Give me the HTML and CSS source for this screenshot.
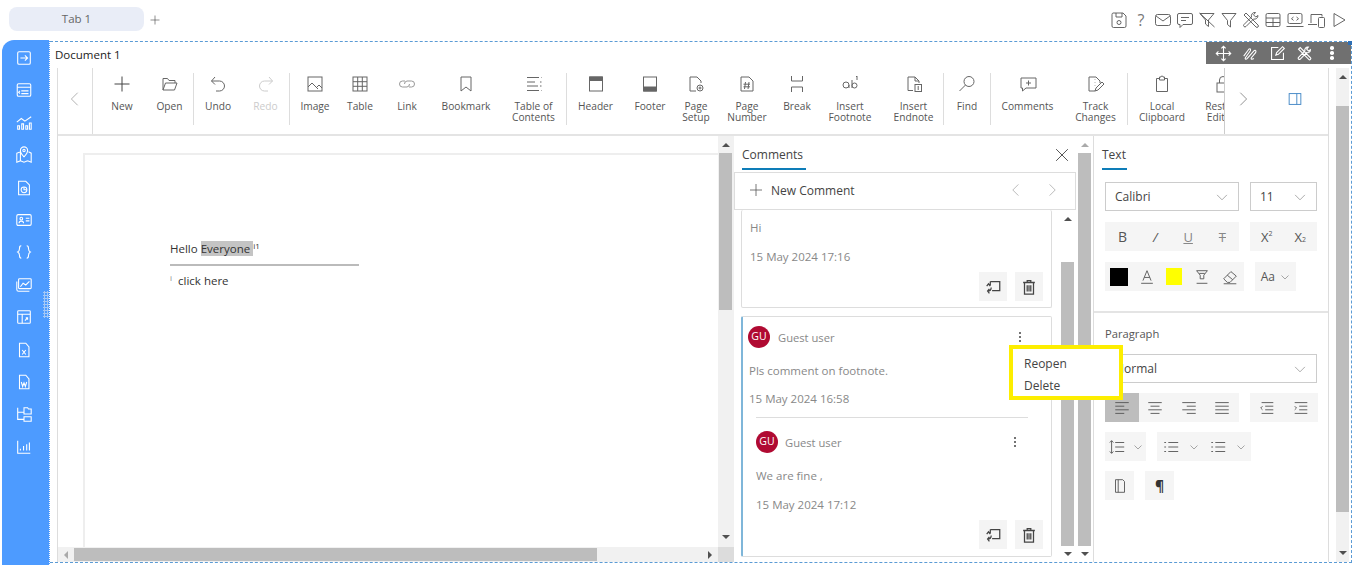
FILE: index.html
```html
<!DOCTYPE html>
<html lang="en">

<head>
    <meta charset="UTF-8">
    <meta name="viewport" content="width=device-width, initial-scale=1.0">
    <title>Document 1</title>
    <link rel="stylesheet" href="styles.css">
</head>

<body>
    <svg class="sprite" xmlns="http://www.w3.org/2000/svg">
        <symbol id="save" viewBox="0 0 20 20"><path d="M4 3h10l3 3v10a1.500 1.500 0 0 1-1.500 1.500h-11A1.500 1.500 0 0 1 3 16V4.500A1.500 1.500 0 0 1 4 3zM7 3v4h6V3"/><circle cx="10" cy="12.500" r="2"/></symbol>
        <symbol id="mail" viewBox="0 0 20 20"><rect x="2.500" y="4.500" width="15" height="11" rx="2"/><path d="M3 6l7 5 7-5"/></symbol>
        <symbol id="comment" viewBox="0 0 20 20"><path d="M4 3.500h12a1.500 1.500 0 0 1 1.500 1.500v8a1.500 1.500 0 0 1-1.500 1.500H8l-3 3v-3H4A1.500 1.500 0 0 1 2.500 13V5A1.500 1.500 0 0 1 4 3.500zM6 7.500h8M6 10.500h5"/></symbol>
        <symbol id="filter-off" viewBox="0 0 20 20"><path d="M3 3.500h14l-5.500 6.500v6.500l-3-2.500v-4zM2.500 3l15 14"/></symbol>
        <symbol id="filter" viewBox="0 0 20 20"><path d="M3 3.500h14l-5.500 7v6.500l-3-2.500v-4z"/></symbol>
        <symbol id="tools" viewBox="0 0 20 20"><path d="M3 5l2-2 12 12a1.400 1.400 0 0 1-2 2zM17 5.500a3.500 3.500 0 0 1-4.500 3.500L5 16.500a1.400 1.400 0 0 1-2-2L10.500 7A3.500 3.500 0 0 1 14.500 2.500L12.500 4.800l2.200 2.200z"/></symbol>
        <symbol id="table" viewBox="0 0 20 20"><rect x="3" y="3.500" width="14" height="13" rx="1.500"/><path d="M3 8h14M3 12.500h14M10 8v8.500"/></symbol>
        <symbol id="code" viewBox="0 0 20 20"><rect x="3" y="3.500" width="14" height="10" rx="1.500"/><path d="M1.500 16.500h17M8.500 7l-2 1.700 2 1.700M11.500 7l2 1.700-2 1.700"/></symbol>
        <symbol id="devices" viewBox="0 0 20 20"><path d="M4 13V4.500h11v2M1 14.500h9"/><rect x="11.500" y="7.500" width="6" height="10" rx="1"/></symbol>
        <symbol id="play" viewBox="0 0 20 20"><path d="M5 3.500l11 6.500-11 6.500z"/></symbol>
        <symbol id="chev-l" viewBox="0 0 20 20"><path d="M13 3l-7 7 7 7"/></symbol>
        <symbol id="chev-r" viewBox="0 0 20 20"><path d="M7 3l7 7-7 7"/></symbol>
        <symbol id="chev-d" viewBox="0 0 20 20"><path d="M3 7l7 7 7-7"/></symbol>
        <symbol id="plus" viewBox="0 0 20 20"><path d="M10 2.500v15M2.500 10h15"/></symbol>
        <symbol id="open" viewBox="0 0 20 20"><path d="M3 16V4.500h4.500l1.500 2h6V9M3 16l2.500-7H17l-2.500 7z"/></symbol>
        <symbol id="undo" viewBox="0 0 20 20"><path d="M7 3L3.500 7 7 10.500M3.500 7h8a4.500 4.500 0 0 1 0 10H8"/></symbol>
        <symbol id="redo" viewBox="0 0 20 20"><path d="M13 3l3.500 4L13 10.500M16.500 7h-8a4.500 4.500 0 0 0 0 10H12"/></symbol>
        <symbol id="image" viewBox="0 0 20 20"><rect x="3" y="3" width="14" height="14"/><path d="M3 13l4-4 6 6M12 13l2-2 3 3"/></symbol>
        <symbol id="grid" viewBox="0 0 20 20"><rect x="3" y="3" width="14" height="14"/><path d="M3 7.700h14M3 12.300h14M7.700 3v14M12.300 3v14"/></symbol>
        <symbol id="link" viewBox="0 0 20 20"><path d="M8 7H5.500a3 3 0 0 0 0 6H10a3 3 0 0 0 2.500-3M12 13h2.500a3 3 0 0 0 0-6H10a3 3 0 0 0-2.500 3"/></symbol>
        <symbol id="bookmark" viewBox="0 0 20 20"><path d="M5 3h10v14l-5-4-5 4z"/></symbol>
        <symbol id="toc" viewBox="0 0 20 20"><path d="M3 3.500h12M17 3.500h.5M3 8h8M3 12h11M3 16.500h12M17 16.500h.5M16 8h1.500M16 12h1.500"/></symbol>
        <symbol id="header" viewBox="0 0 20 20"><rect x="3.500" y="3" width="13" height="14"/><path class="solid" d="M3.500 3h13v3.500h-13z"/></symbol>
        <symbol id="footer" viewBox="0 0 20 20"><rect x="3.500" y="3" width="13" height="14"/><path class="solid" d="M3.500 13h13v4h-13z"/></symbol>
        <symbol id="setup" viewBox="0 0 20 20"><path d="M4 3h7l4 4v2M4 3v14h6"/><circle cx="14" cy="14" r="3"/><circle cx="14" cy="14" r="1"/></symbol>
        <symbol id="number" viewBox="0 0 20 20"><path d="M4 3h8l4 4v10H4zM8.500 8l-1 7M12 8l-1 7M6.500 10.200h6.500M6.500 12.800h6.500"/></symbol>
        <symbol id="break" viewBox="0 0 20 20"><path d="M4.500 2v5h11V2M4.500 18v-5h11v5"/></symbol>
        <symbol id="footnote" viewBox="0 0 20 20"><circle cx="6" cy="11" r="3"/><path d="M9 11v3M12 6v8"/><circle cx="14.500" cy="11.500" r="2.500"/><path d="M16 3l1-1v4"/></symbol>
        <symbol id="endnote" viewBox="0 0 20 20"><path d="M4 16.500V3h7l4 4v2M4 16.500h5M11 3v4h4"/><rect x="11" y="10.500" width="6.500" height="7"/><path d="M14.200 12v4"/></symbol>
        <symbol id="find" viewBox="0 0 20 20"><circle cx="12" cy="7.500" r="5"/><path d="M8.500 11l-6 6"/></symbol>
        <symbol id="add-comment" viewBox="0 0 20 20"><path d="M3 4h15v10H8l-3.500 3v-3H3zM10.500 6.500v5M8 9h5"/></symbol>
        <symbol id="track" viewBox="0 0 20 20"><path d="M3 3h7l4 4v2M3 3v14h6M9 5.500v.5M9 8.500v.5M9 11.500v.5M12 16l6-6-2-2-6 6-1 3z"/></symbol>
        <symbol id="clipboard" viewBox="0 0 20 20"><path d="M7.500 4.500H4.500v13h11v-13h-3M7.500 3h1.500a1 1 0 0 1 2 0h1.500v3h-5z"/></symbol>
        <symbol id="lock" viewBox="0 0 20 20"><rect x="4" y="9" width="12" height="9"/><path d="M6.500 9V6a3.500 3.500 0 0 1 7 0v3"/></symbol>
        <symbol id="panel" viewBox="0 0 20 20"><rect x="3.500" y="4" width="13" height="12"/><path d="M12 4v12"/></symbol>
        <symbol id="close" viewBox="0 0 20 20"><path d="M3.500 3.500l13 13M16.500 3.500l-13 13"/></symbol>
        <symbol id="reply" viewBox="0 0 20 20"><path d="M7 4h10.500v10H9M7 8V4M6 17l-2-2.500 2-2.500M4 14.500c3 0 4-1 4-4M3 9l2-2.500L7 9"/></symbol>
        <symbol id="trash" viewBox="0 0 20 20"><path d="M3.500 5h13M8 5V3h4v2M5 5h10v13H5zM8 8v7M12 8v7M10 8v7"/></symbol>
        <symbol id="move" viewBox="0 0 20 20"><path d="M10 1.500v17M1.500 10h17M7.500 4L10 1.500 12.500 4M7.500 16l2.500 2.500 2.500-2.500M4 7.500L1.500 10 4 12.500M16 7.500l2.500 2.500-2.500 2.500"/></symbol>
        <symbol id="scribble" viewBox="0 0 20 20"><path d="M2 13l6-8c2-2 3 1 1 3l-5 7c-1 2 1 2 2 1l8-9c2-2 3 0 2 2l-5 6c-1 2 1 2 3 1"/></symbol>
        <symbol id="edit" viewBox="0 0 20 20"><path d="M17 9v8H3V3h8M8 12l1-3 7-7 2 2-7 7z"/></symbol>
        <symbol id="bold-a" viewBox="0 0 20 20"><path d="M5.500 14L10 3l4.500 11M7 10.500h6M3.500 17h13"/></symbol>
        <symbol id="marker" viewBox="0 0 20 20"><path d="M4 3h12l-4 5v4H8V8zM7 6h6M4 17h12"/></symbol>
        <symbol id="eraser" viewBox="0 0 20 20"><path d="M3 12l8-8 6 5-7 7H7zM7 8l6 5M3 17.500h14"/></symbol>
        <symbol id="al" viewBox="0 0 20 20"><path d="M2.500 4h15M2.500 8h10M2.500 12h15M2.500 16h10"/></symbol>
        <symbol id="ac" viewBox="0 0 20 20"><path d="M2.500 4h15M5 8h10M2.500 12h15M5 16h10"/></symbol>
        <symbol id="ar" viewBox="0 0 20 20"><path d="M2.500 4h15M7.500 8h10M2.500 12h15M7.500 16h10"/></symbol>
        <symbol id="aj" viewBox="0 0 20 20"><path d="M2.500 4h15M2.500 8h15M2.500 12h15M2.500 16h15"/></symbol>
        <symbol id="out" viewBox="0 0 20 20"><path d="M4 4h13M8 8h9M8 12h9M4 16h13M5 8l-2 2 2 2"/></symbol>
        <symbol id="in" viewBox="0 0 20 20"><path d="M3 4h14M8 8h9M8 12h9M3 16h14M3 8l2 2-2 2"/></symbol>
        <symbol id="spacing" viewBox="0 0 20 20"><path d="M4 3v14M2 5l2-2 2 2M2 15l2 2 2-2M8 5h10M8 10h10M8 15h10"/></symbol>
        <symbol id="list" viewBox="0 0 20 20"><path d="M7 5h11M7 10h11M7 15h11M2.500 5h2M2.500 10h2M2.500 15h2"/></symbol>
        <symbol id="page" viewBox="0 0 20 20"><path d="M5 3h8l2 2v12H5zM8 3v14"/></symbol>
        <symbol id="side-in" viewBox="0 0 20 20"><rect x="3" y="3" width="14" height="14" rx="1.500"/><path d="M6 10h8M11 7l3 3-3 3"/></symbol>
        <symbol id="side-form" viewBox="0 0 20 20"><rect x="2.500" y="3" width="15" height="14" rx="1.500"/><path d="M2.500 7h15M7 11h8M7 14h8M5.500 11l-1.500 1.500 1.500 1.500"/></symbol>
        <symbol id="side-chart" viewBox="0 0 20 20"><path d="M2 9l5-4 4 3 7-5M3 17v-4h2v4zM7.500 17v-6h2v6zM12 17v-4h2v4zM16 17v-7h2v7z"/></symbol>
        <symbol id="side-map" viewBox="0 0 20 20"><path d="M2 8l4-1.500v10L2 18zM6 16.500l4 1.500 4-1.500M14 16.500l4 1.500V8l-3-1.500M10 12c-3-3-4-5-4-7a4 4 0 0 1 8 0c0 2-1 4-4 7z"/><circle cx="10" cy="5" r="1.300"/></symbol>
        <symbol id="side-report" viewBox="0 0 20 20"><path d="M4 2.500h8l4 4v11H4z"/><circle cx="10" cy="12" r="3.200"/><path d="M10 9v3h3"/></symbol>
        <symbol id="side-card" viewBox="0 0 20 20"><rect x="2" y="4" width="16" height="12" rx="1.500"/><circle cx="7" cy="8.500" r="1.500"/><path d="M4.500 13.500c0-3 5-3 5 0M12 8h4M12 11h4"/></symbol>
        <symbol id="side-json" viewBox="0 0 20 20"><path d="M7 3C5 3 5 4 5 6s0 3-2 4c2 1 2 2 2 4s0 3 2 3M13 3c2 0 2 1 2 3s0 3 2 4c-2 1-2 2-2 4s0 3-2 3"/></symbol>
        <symbol id="side-image" viewBox="0 0 20 20"><rect x="4" y="3" width="14" height="11" rx="1"/><path d="M2 6v9a2 2 0 0 0 2 2h12M6 12l3-4 3 2 4-4"/></symbol>
        <symbol id="side-table" viewBox="0 0 20 20"><rect x="3" y="3" width="14" height="14" rx="1"/><path d="M3 7h14M8 7v10M11 14l3-3M14 13v-2h-2"/></symbol>
        <symbol id="side-excel" viewBox="0 0 20 20"><path d="M5 2.500h7l3.500 4v11H5zM8 10l4 5M12 10l-4 5"/></symbol>
        <symbol id="side-word" viewBox="0 0 20 20"><path d="M5 2.500h7l3.500 4v11H5zM7 10l1.500 5L10 11l1.500 4L13 10"/></symbol>
        <symbol id="side-tree" viewBox="0 0 20 20"><path d="M3 3v13h7M3 8h7M10 3h4l1 1.500h3V10h-8zM10 13h8v5h-8z"/></symbol>
        <symbol id="side-bars" viewBox="0 0 20 20"><path d="M3 3v14h14M6 14v-2M9.500 14v-5M13 14V7M16 14V5"/></symbol>
    </svg>

    <div class="topbar">
        <div class="tab">Tab 1</div>
        <svg class="ic add-tab"><use href="#plus"/></svg>
        <div class="top-actions">
            <svg class="ic"><use href="#save"/></svg>
            <span class="help">?</span>
            <svg class="ic"><use href="#mail"/></svg>
            <svg class="ic"><use href="#comment"/></svg>
            <svg class="ic"><use href="#filter-off"/></svg>
            <svg class="ic"><use href="#filter"/></svg>
            <svg class="ic"><use href="#tools"/></svg>
            <svg class="ic"><use href="#table"/></svg>
            <svg class="ic"><use href="#code"/></svg>
            <svg class="ic"><use href="#devices"/></svg>
            <svg class="ic"><use href="#play"/></svg>
        </div>
    </div>

    <div class="workspace">
        <nav class="sidebar">
            <svg class="ic"><use href="#side-in"/></svg>
            <svg class="ic"><use href="#side-form"/></svg>
            <svg class="ic"><use href="#side-chart"/></svg>
            <svg class="ic"><use href="#side-map"/></svg>
            <svg class="ic"><use href="#side-report"/></svg>
            <svg class="ic"><use href="#side-card"/></svg>
            <svg class="ic"><use href="#side-json"/></svg>
            <svg class="ic"><use href="#side-image"/></svg>
            <svg class="ic"><use href="#side-table"/></svg>
            <svg class="ic"><use href="#side-excel"/></svg>
            <svg class="ic"><use href="#side-word"/></svg>
            <svg class="ic"><use href="#side-tree"/></svg>
            <svg class="ic"><use href="#side-bars"/></svg>
            <div class="grip"></div>
        </nav>

        <main class="widget">
            <div class="widget-bar">
                <svg class="ic"><use href="#move"/></svg>
                <svg class="ic"><use href="#scribble"/></svg>
                <svg class="ic"><use href="#edit"/></svg>
                <svg class="ic"><use href="#tools"/></svg>
                <span class="dots"><i></i><i></i><i></i></span>
            </div>
            <div class="widget-handle"></div>

            <div class="doc-title">Document 1</div>

            <div class="widget-body">
                <div class="editor">
                    <div class="toolbar">
                        <div class="tb-nav"><svg class="ic"><use href="#chev-l"/></svg></div>
                        <div class="tb-items">
                            <div class="tb w48 first"><svg class="ic"><use href="#plus"/></svg><span>New</span></div>
                            <div class="tb w47"><svg class="ic"><use href="#open"/></svg><span>Open</span></div>
                            <div class="tb-sep"></div>
                            <div class="tb w48"><svg class="ic"><use href="#undo"/></svg><span>Undo</span></div>
                            <div class="tb w47 off"><svg class="ic"><use href="#redo"/></svg><span>Redo</span></div>
                            <div class="tb-sep"></div>
                            <div class="tb w50"><svg class="ic"><use href="#image"/></svg><span>Image</span></div>
                            <div class="tb w40"><svg class="ic"><use href="#grid"/></svg><span>Table</span></div>
                            <div class="tb w54 soft"><svg class="ic"><use href="#link"/></svg><span>Link</span></div>
                            <div class="tb w64"><svg class="ic"><use href="#bookmark"/></svg><span>Bookmark</span></div>
                            <div class="tb w68 nudge"><svg class="ic"><use href="#toc"/></svg><span>Table of<br>Contents</span></div>
                            <div class="tb-sep"></div>
                            <div class="tb w57"><svg class="ic"><use href="#header"/></svg><span>Header</span></div>
                            <div class="tb w52"><svg class="ic"><use href="#footer"/></svg><span>Footer</span></div>
                            <div class="tb w40"><svg class="ic"><use href="#setup"/></svg><span>Page<br>Setup</span></div>
                            <div class="tb w62"><svg class="ic"><use href="#number"/></svg><span>Page<br>Number</span></div>
                            <div class="tb w38"><svg class="ic"><use href="#break"/></svg><span>Break</span></div>
                            <div class="tb w68"><svg class="ic"><use href="#footnote"/></svg><span>Insert<br>Footnote</span></div>
                            <div class="tb w59"><svg class="ic"><use href="#endnote"/></svg><span>Insert<br>Endnote</span></div>
                            <div class="tb-sep"></div>
                            <div class="tb w46"><svg class="ic"><use href="#find"/></svg><span>Find</span></div>
                            <div class="tb-sep"></div>
                            <div class="tb w73"><svg class="ic"><use href="#add-comment"/></svg><span>Comments</span></div>
                            <div class="tb w63"><svg class="ic"><use href="#track"/></svg><span>Track<br>Changes</span></div>
                            <div class="tb-sep"></div>
                            <div class="tb w68"><svg class="ic"><use href="#clipboard"/></svg><span>Local<br>Clipboard</span></div>
                            <div class="tb w54"><svg class="ic"><use href="#lock"/></svg><span>Restrict<br>Editing</span></div>
                        </div>
                        <div class="tb-end">
                            <svg class="ic"><use href="#chev-r"/></svg>
                            <svg class="ic panel-toggle"><use href="#panel"/></svg>
                        </div>
                    </div>

                    <div class="panes">
                        <section class="doc-pane">
                            <div class="doc-view">
                                <div class="canvas">
                                    <div class="page">
                                        <p class="line">Hello <span class="selected">Everyone </span><sup>i1</sup></p>
                                        <div class="note-rule"></div>
                                        <p class="line note"><sup>i</sup>click here</p>
                                    </div>
                                </div>
                                <div class="scroll-v doc-scroll-v"><b class="up"></b><u></u><b class="down"></b></div>
                            </div>
                            <div class="doc-bottom">
                                <div class="scroll-h"><b class="left"></b><u></u><b class="right"></b></div>
                                <div class="corner"></div>
                            </div>
                        </section>

                        <section class="comments">
                            <div class="comments-head">
                                <div class="pane-tab">Comments</div>
                                <svg class="ic close"><use href="#close"/></svg>
                            </div>
                            <div class="new-comment">
                                <svg class="ic"><use href="#plus"/></svg>
                                <span>New Comment</span>
                                <svg class="ic nav-l"><use href="#chev-l"/></svg>
                                <svg class="ic nav-r"><use href="#chev-r"/></svg>
                            </div>
                            <div class="comment-list">
                                <div class="cards">
                                    <div class="card card-first">
                                        <p class="c-text">Hi</p>
                                        <p class="c-date">15 May 2024 17:16</p>
                                        <div class="c-actions">
                                            <div class="btn"><svg class="ic"><use href="#reply"/></svg></div>
                                            <div class="btn"><svg class="ic"><use href="#trash"/></svg></div>
                                        </div>
                                    </div>
                                    <div class="card card-active">
                                        <div class="c-user">
                                            <span class="avatar">GU</span><span class="name">Guest user</span>
                                            <span class="kebab"><i></i><i></i><i></i></span>
                                        </div>
                                        <p class="c-text">Pls comment on footnote.</p>
                                        <p class="c-date">15 May 2024 16:58</p>
                                        <div class="c-reply">
                                            <div class="c-user">
                                                <span class="avatar">GU</span><span class="name">Guest user</span>
                                                <span class="kebab"><i></i><i></i><i></i></span>
                                            </div>
                                            <p class="c-text">We are fine ,</p>
                                            <p class="c-date">15 May 2024 17:12</p>
                                        </div>
                                        <div class="c-actions">
                                            <div class="btn"><svg class="ic"><use href="#reply"/></svg></div>
                                            <div class="btn"><svg class="ic"><use href="#trash"/></svg></div>
                                        </div>
                                        <div class="menu">
                                            <div>Reopen</div>
                                            <div>Delete</div>
                                        </div>
                                    </div>
                                </div>
                                <div class="scroll-v list-scroll"><b class="up"></b><u></u><b class="down"></b></div>
                            </div>
                        </section>

                        <div class="scroll-v comments-scroll"><b class="up light"></b><u></u><b class="down"></b></div>

                        <section class="props">
                            <div class="props-text">
                                <div class="pane-tab">Text</div>
                                <div class="row row-select">
                                    <div class="select w134"><span>Calibri</span><svg class="ic"><use href="#chev-d"/></svg></div>
                                    <div class="select w67"><span>11</span><svg class="ic"><use href="#chev-d"/></svg></div>
                                </div>
                                <div class="row">
                                    <div class="group w134">
                                        <span class="fmt b">B</span><span class="fmt i">/</span><span class="fmt u">U</span><span class="fmt s">T</span>
                                    </div>
                                    <div class="group w67">
                                        <span class="fmt">X<small class="up-s">2</small></span><span class="fmt">X<small class="dn-s">2</small></span>
                                    </div>
                                </div>
                                <div class="row">
                                    <div class="group w139">
                                        <span class="swatch black"></span>
                                        <span class="fmt"><svg class="ic"><use href="#bold-a"/></svg></span>
                                        <span class="swatch yellow"></span>
                                        <span class="fmt"><svg class="ic"><use href="#marker"/></svg></span>
                                        <span class="fmt"><svg class="ic"><use href="#eraser"/></svg></span>
                                    </div>
                                    <div class="group w41 case">Aa<svg class="ic mini"><use href="#chev-d"/></svg></div>
                                </div>
                            </div>
                            <div class="props-para">
                                <div class="para-title">Paragraph</div>
                                <div class="row">
                                    <div class="select w212"><span>Normal</span><svg class="ic"><use href="#chev-d"/></svg></div>
                                </div>
                                <div class="row">
                                    <div class="group w134 flat">
                                        <span class="fmt on"><svg class="ic"><use href="#al"/></svg></span>
                                        <span class="fmt"><svg class="ic"><use href="#ac"/></svg></span>
                                        <span class="fmt"><svg class="ic"><use href="#ar"/></svg></span>
                                        <span class="fmt"><svg class="ic"><use href="#aj"/></svg></span>
                                    </div>
                                    <div class="group w68">
                                        <span class="fmt"><svg class="ic"><use href="#out"/></svg></span>
                                        <span class="fmt"><svg class="ic"><use href="#in"/></svg></span>
                                    </div>
                                </div>
                                <div class="row">
                                    <div class="group w41"><span class="fmt"><svg class="ic"><use href="#spacing"/></svg></span><svg class="ic mini"><use href="#chev-d"/></svg></div>
                                    <div class="group w94">
                                        <span class="fmt"><svg class="ic"><use href="#list"/></svg></span><svg class="ic mini"><use href="#chev-d"/></svg>
                                        <span class="fmt"><svg class="ic"><use href="#list"/></svg></span><svg class="ic mini"><use href="#chev-d"/></svg>
                                    </div>
                                </div>
                                <div class="row">
                                    <div class="group w29"><span class="fmt"><svg class="ic"><use href="#page"/></svg></span></div>
                                    <div class="group w29 pilcrow">¶</div>
                                </div>
                            </div>
                        </section>
                    </div>
                </div>
                <div class="scroll-v main-scroll"><b class="up"></b><u></u><b class="down"></b></div>
            </div>
        </main>
    </div>
</body>

</html>
```

FILE: styles.css
```css
* {
    box-sizing: border-box;
}

html, body {
    margin: 0;
    height: 100%;
}

body {
    width: 1357px;
    height: 567px;
    overflow: hidden;
    background: white;
    font-family: "Open Sans", "Noto Sans", sans-serif;
    font-size: 11px;
    color: #444;
}

p {
    margin: 0;
}

.sprite {
    display: none;
}

.ic {
    width: 20px;
    height: 20px;
    flex: none;
    fill: none;
    stroke: currentColor;
    stroke-width: 1;
}

.solid {
    fill: currentColor;
}

/* top bar */
.topbar {
    height: 40px;
    display: flex;
    align-items: center;
    padding-left: 9px;
}

.tab {
    width: 135px;
    height: 24px;
    margin-top: -3px;
    line-height: 24px;
    background: #e9edf7;
    border-radius: 8px;
    text-align: center;
    color: #666;
    font-size: 11.500px;
}

.add-tab {
    width: 12px;
    height: 12px;
    margin-left: 5px;
    color: #444;
}

.top-actions {
    margin-left: auto;
    margin-right: 8px;
    display: flex;
    align-items: center;
    gap: 2px;
    color: #555;
}

.top-actions .ic {
    stroke-width: 0.900;
}

.help {
    width: 20px;
    text-align: center;
    font-size: 16px;
    line-height: 20px;
    color: #777;
}

.workspace {
    display: flex;
    height: 525px;
    padding-left: 2px;
}

/* left strip */
.sidebar {
    position: relative;
    width: 48px;
    background: #4d9bff;
    border-top-left-radius: 12px;
    display: flex;
    flex-direction: column;
    align-items: center;
    padding: 9px 4px 0 0;
    gap: 14.400px;
    color: white;
    border-right: 1px dotted white;
}

.sidebar .ic {
    width: 18px;
    height: 18px;
    stroke-width: 1.200;
}

.grip {
    position: absolute;
    left: 41px;
    top: 251px;
    width: 6px;
    height: 27px;
    background-image: radial-gradient(#a5c8f5 1px, transparent 1.200px);
    background-size: 3px 3px;
}

/* widget */
.widget {
    position: relative;
    width: 1302px;
    height: 522px;
    margin-top: 1px;
    border-top: 1px dashed #5b9bd5;
    border-right: 1px dashed #5b9bd5;
    border-bottom: 1px dashed #5b9bd5;
    display: flex;
    flex-direction: column;
}

.widget-bar {
    position: absolute;
    top: 0;
    right: 0;
    width: 145px;
    height: 22px;
    background: #707070;
    color: white;
    display: flex;
    align-items: center;
    padding-left: 9px;
    gap: 10px;
    z-index: 5;
}

.widget-bar .ic {
    width: 17px;
    height: 17px;
    stroke-width: 1.300;
}

.dots {
    display: flex;
    flex-direction: column;
    gap: 1.500px;
    margin-left: 7px;
}

.dots i {
    width: 3.500px;
    height: 3.500px;
    background: white;
    border-radius: 50%;
}

.widget-handle {
    position: absolute;
    top: -1px;
    right: -1px;
    width: 4px;
    height: 4px;
    background: #2d6fb5;
    z-index: 6;
}

.doc-title {
    height: 26px;
    padding: 5px 0 0 5px;
    font-size: 11.500px;
    line-height: 16px;
    color: #222;
}

.widget-body {
    flex: 1;
    min-height: 0;
    display: flex;
}

.editor {
    margin-left: 7px;
    width: 1272px;
    border-left: 1px solid #ddd;
    border-right: 1px solid #ddd;
    display: flex;
    flex-direction: column;
}

/* ribbon */
.toolbar {
    height: 68px;
    border-bottom: 2px solid #e4e4e4;
    display: flex;
}

.tb-nav {
    width: 35px;
    display: flex;
    align-items: center;
    justify-content: center;
    border-right: 1px solid #ddd;
    color: #aaa;
    padding-bottom: 4px;
}

.tb-nav .ic {
    width: 18px;
    height: 18px;
}

.tb-items {
    width: 1131px;
    padding-left: 5px;
    display: flex;
    overflow: hidden;
    padding-top: 6px;
}

.tb {
    flex: none;
    display: flex;
    flex-direction: column;
    align-items: center;
    color: #555;
    overflow: hidden;
}

.tb .ic {
    color: #666;
    margin-bottom: 7px;
}

.tb.first .ic {
    color: #444;
}

.tb.soft .ic {
    color: #999;
}

.tb.nudge {
    padding-left: 3px;
}

.tb span {
    line-height: 11px;
    text-align: center;
    white-space: nowrap;
    font-size: 10.200px;
}

.tb.off, .tb.off .ic {
    color: #ccc;
}

.tb-sep {
    flex: none;
    width: 1px;
    height: 52px;
    background: #ddd;
    margin-top: -1px;
}

.w38 { width: 38px; }
.w40 { width: 40px; }
.w46 { width: 46px; }
.w47 { width: 47px; }
.w48 { width: 48px; }
.w50 { width: 50px; }
.w52 { width: 52px; }
.w54 { width: 54px; }
.w57 { width: 57px; }
.w59 { width: 59px; }
.w62 { width: 62px; }
.w63 { width: 63px; }
.w64 { width: 64px; }
.w68 { width: 68px; }
.w73 { width: 73px; }

.tb-end {
    flex: 1;
    border-left: 1px solid #ccc;
    display: flex;
    align-items: center;
    padding: 0 0 4px 9px;
    color: #888;
}

.tb-end .ic {
    width: 18px;
    height: 18px;
}

.panel-toggle {
    margin-left: 34px;
    color: #3b82c4;
}

.panes {
    flex: 1;
    min-height: 0;
    display: flex;
}

/* document pane */
.doc-pane {
    width: 676px;
    display: flex;
    flex-direction: column;
}

.doc-view {
    flex: 1;
    min-height: 0;
    display: flex;
}

.canvas {
    flex: 1;
    padding: 17px 0 0 25px;
    overflow: hidden;
}

.page {
    width: 700px;
    height: 500px;
    border: 2px solid #eee;
    border-right: none;
    padding: 85px 0 0 85px;
}

.line {
    font-size: 11.500px;
    line-height: 18px;
    color: #333;
}

.line sup {
    font-size: 8px;
    line-height: 0;
    vertical-align: 4px;
}

.selected {
    background: #c4c4c4;
}

.note-rule {
    width: 189px;
    height: 2px;
    background: #bbb;
    margin-top: 6px;
}

.note {
    margin-top: 6px;
}

.note sup {
    margin-right: 6px;
    color: #888;
}

.scroll-v {
    position: relative;
    flex: none;
    background: #f1f1f1;
}

.scroll-v u {
    position: absolute;
    left: 0;
    right: 0;
    background: #bdbdbd;
}

.scroll-v b {
    position: absolute;
    left: 50%;
    margin-left: -4px;
    border-left: 4px solid transparent;
    border-right: 4px solid transparent;
}

.scroll-v b.up {
    border-bottom: 4px solid #505050;
}

.scroll-v b.up.light {
    border-bottom-color: #aaa;
}

.scroll-v b.down {
    border-top: 4px solid #505050;
}

.doc-scroll-v {
    width: 16px;
}

.doc-scroll-v u {
    top: 17px;
    height: 157px;
    left: 1px;
    right: 2px;
}

.doc-scroll-v .up {
    top: 7px;
    border-bottom-color: #aaa;
}

.doc-scroll-v .down {
    top: 399px;
}

.doc-bottom {
    height: 15px;
    display: flex;
}

.scroll-h {
    position: relative;
    flex: 1;
    background: #f1f1f1;
}

.scroll-h u {
    position: absolute;
    left: 16px;
    width: 523px;
    top: 1px;
    bottom: 1px;
    background: #bdbdbd;
}

.scroll-h b {
    position: absolute;
    top: 4px;
    border-top: 4px solid transparent;
    border-bottom: 4px solid transparent;
}

.scroll-h .left {
    left: 6px;
    border-right: 4px solid #aaa;
}

.scroll-h .right {
    right: 6px;
    border-left: 4px solid #505050;
}

.corner {
    width: 16px;
    background: #dcdcdc;
}

/* comments pane */
.comments {
    width: 343px;
    display: flex;
    flex-direction: column;
}

.comments-head {
    height: 36px;
    display: flex;
    align-items: flex-start;
    padding: 9px 6px 0 8px;
    justify-content: space-between;
}

.pane-tab {
    font-size: 12px;
    line-height: 20px;
    color: #444;
    height: 25px;
    border-bottom: 2px solid #0e7db8;
    padding-right: 3px;
}

.close {
    width: 18px;
    height: 18px;
    margin-top: 1px;
    color: #444;
}

.new-comment {
    height: 38px;
    width: 342px;
    border: 1px solid #ddd;
    display: flex;
    align-items: center;
    padding: 0 0 2px 13px;
    font-size: 12px;
    color: #444;
    background: white;
}

.new-comment .ic {
    width: 16px;
    height: 16px;
    margin-right: 7px;
    color: #555;
}

.new-comment .nav-l {
    margin-left: 153px;
    margin-right: 20px;
    color: #aaa;
}

.new-comment .nav-r {
    color: #aaa;
    margin-right: 0;
}

.comment-list {
    flex: 1;
    min-height: 0;
    display: flex;
    padding-left: 7px;
}

.cards {
    width: 311px;
    margin-right: 1px;
    display: flex;
    flex-direction: column;
    gap: 8px;
}

.card {
    border: 1px solid #ddd;
    border-radius: 2px;
    font-size: 11.500px;
    color: #888;
}

.card-first {
    position: relative;
    height: 98px;
    border-top: none;
    padding: 10px 8px 0;
}

.card-first .c-actions {
    bottom: 6px;
}

.card-active {
    position: relative;
    height: 241px;
    border-left: 2px solid #7fb6d9;
    padding: 11px 8px 0 5px;
}

.c-text {
    line-height: 15px;
}

.c-date {
    line-height: 15px;
    margin-top: 14px;
}

.c-actions {
    position: absolute;
    display: flex;
    gap: 8px;
    right: 8px;
    bottom: 7px;
}

.btn {
    width: 28px;
    height: 29px;
    background: #f4f4f4;
    display: flex;
    align-items: center;
    justify-content: center;
    color: #444;
}

.btn .ic {
    width: 18px;
    height: 18px;
    stroke-width: 1.400;
}

.c-user {
    display: flex;
    align-items: center;
    height: 22px;
    margin-top: -2px;
    margin-bottom: 15px;
}

.avatar {
    width: 22px;
    height: 22px;
    border-radius: 50%;
    background: #b00a32;
    color: white;
    font-size: 10.500px;
    line-height: 21px;
    text-align: center;
    margin-right: 8px;
}

.name {
    color: #888;
    font-size: 11.200px;
}

.kebab {
    margin-left: auto;
    margin-right: 22px;
    display: flex;
    flex-direction: column;
    gap: 2px;
}

.kebab i {
    width: 2px;
    height: 2px;
    background: #444;
    border-radius: 50%;
}

.card-active > .c-text {
    margin-left: 1px;
}

.card-active > .c-date {
    margin: 13px 0 0 1px;
}

.c-reply {
    margin: 11px 15px 0 8px;
    border-top: 1px solid #ddd;
    padding-top: 15px;
}

.c-reply .c-user {
    margin-bottom: 15px;
}

.c-reply .avatar {
    margin-right: 7px;
}

.c-reply .kebab {
    margin-right: 12px;
}

.menu {
    position: absolute;
    left: 266px;
    top: 28px;
    width: 114px;
    height: 55px;
    border: 4px solid #fdee00;
    background: white;
    padding: 4px 0 0 11px;
    font-size: 12px;
    line-height: 22px;
    color: #444;
    z-index: 4;
}

.list-scroll {
    width: 13px;
    margin-left: 8px;
    background: white;
}

.list-scroll u {
    top: 52px;
    bottom: 16px;
}

.list-scroll .up {
    top: 7px;
}

.list-scroll .down {
    bottom: 6px;
    border-top-color: #aaa;
}

.comments-scroll {
    width: 13px;
    margin: 0 1px;
    background: white;
}

.comments-scroll u {
    top: 17px;
    bottom: 16px;
}

.comments-scroll .up {
    top: 7px;
}

.comments-scroll .down {
    bottom: 6px;
}

/* right panel */
.props {
    width: 235px;
    margin-left: 1px;
    border-left: 1px solid #ddd;
}

.props-text {
    height: 177px;
    border-bottom: 2px solid #e4e4e4;
    padding: 9px 0 0 8px;
}

.props-text .pane-tab {
    width: 25px;
    padding-right: 0;
    margin-bottom: 12px;
}

.row {
    display: flex;
    gap: 11px;
    margin-bottom: 10px;
    padding-left: 3px;
}

.props-text .row {
    margin-bottom: 11px;
}

.row-select {
    height: 29px;
}

.select {
    height: 29px;
    border: 1px solid #ccc;
    display: flex;
    align-items: center;
    justify-content: space-between;
    padding: 0 8px 0 9px;
    font-size: 12px;
    color: #444;
}

.select .ic {
    width: 14px;
    height: 14px;
    color: #888;
    margin-right: 1px;
}

.w134 { width: 134px; }
.w67 { width: 67px; }
.w212 { width: 212px; }
.w139 { width: 139px; }
.w41 { width: 41px; }
.w94 { width: 94px; }
.w29 { width: 29px; }

.group {
    height: 29px;
    background: #f5f5f5;
    display: flex;
    align-items: center;
    justify-content: space-around;
    color: #555;
    font-size: 13px;
}

.fmt {
    display: flex;
    align-items: center;
    justify-content: center;
    height: 100%;
}

.fmt .ic {
    width: 18px;
    height: 18px;
}

.fmt small {
    font-size: 7px;
}

.up-s {
    margin-top: -6px;
}

.dn-s {
    margin-top: 6px;
}

.b {
    font-size: 14px;
}

.i {
    font-style: italic;
}

.u {
    text-decoration: underline;
    color: #888;
}

.s {
    text-decoration: line-through;
    color: #888;
}

.swatch {
    width: 18px;
    height: 18px;
}

.black {
    background: black;
}

.yellow {
    background: #ffff00;
    width: 16px;
    height: 17px;
}

.case {
    font-size: 12px;
}

.mini {
    width: 10px;
    height: 10px;
    color: #555;
}

.case .mini {
    margin-left: -6px;
}

.props-para {
    padding: 12px 0 0 11px;
}

.props-para .row {
    padding-left: 0;
}

.para-title {
    font-size: 11.200px;
    line-height: 18px;
    color: #555;
    margin-bottom: 11px;
}

.flat {
    justify-content: stretch;
}

.flat .fmt {
    flex: 1;
}

.on {
    background: #bdbdbd;
}

.pilcrow {
    font-size: 14px;
    font-weight: 700;
    color: #333;
}

.main-scroll {
    width: 13px;
    margin-left: 7px;
    background: #f1f1f1;
}

.main-scroll u {
    top: 38px;
    bottom: 50px;
}

.main-scroll .up {
    top: 7px;
}

.main-scroll .down {
    bottom: 7px;
}
```
